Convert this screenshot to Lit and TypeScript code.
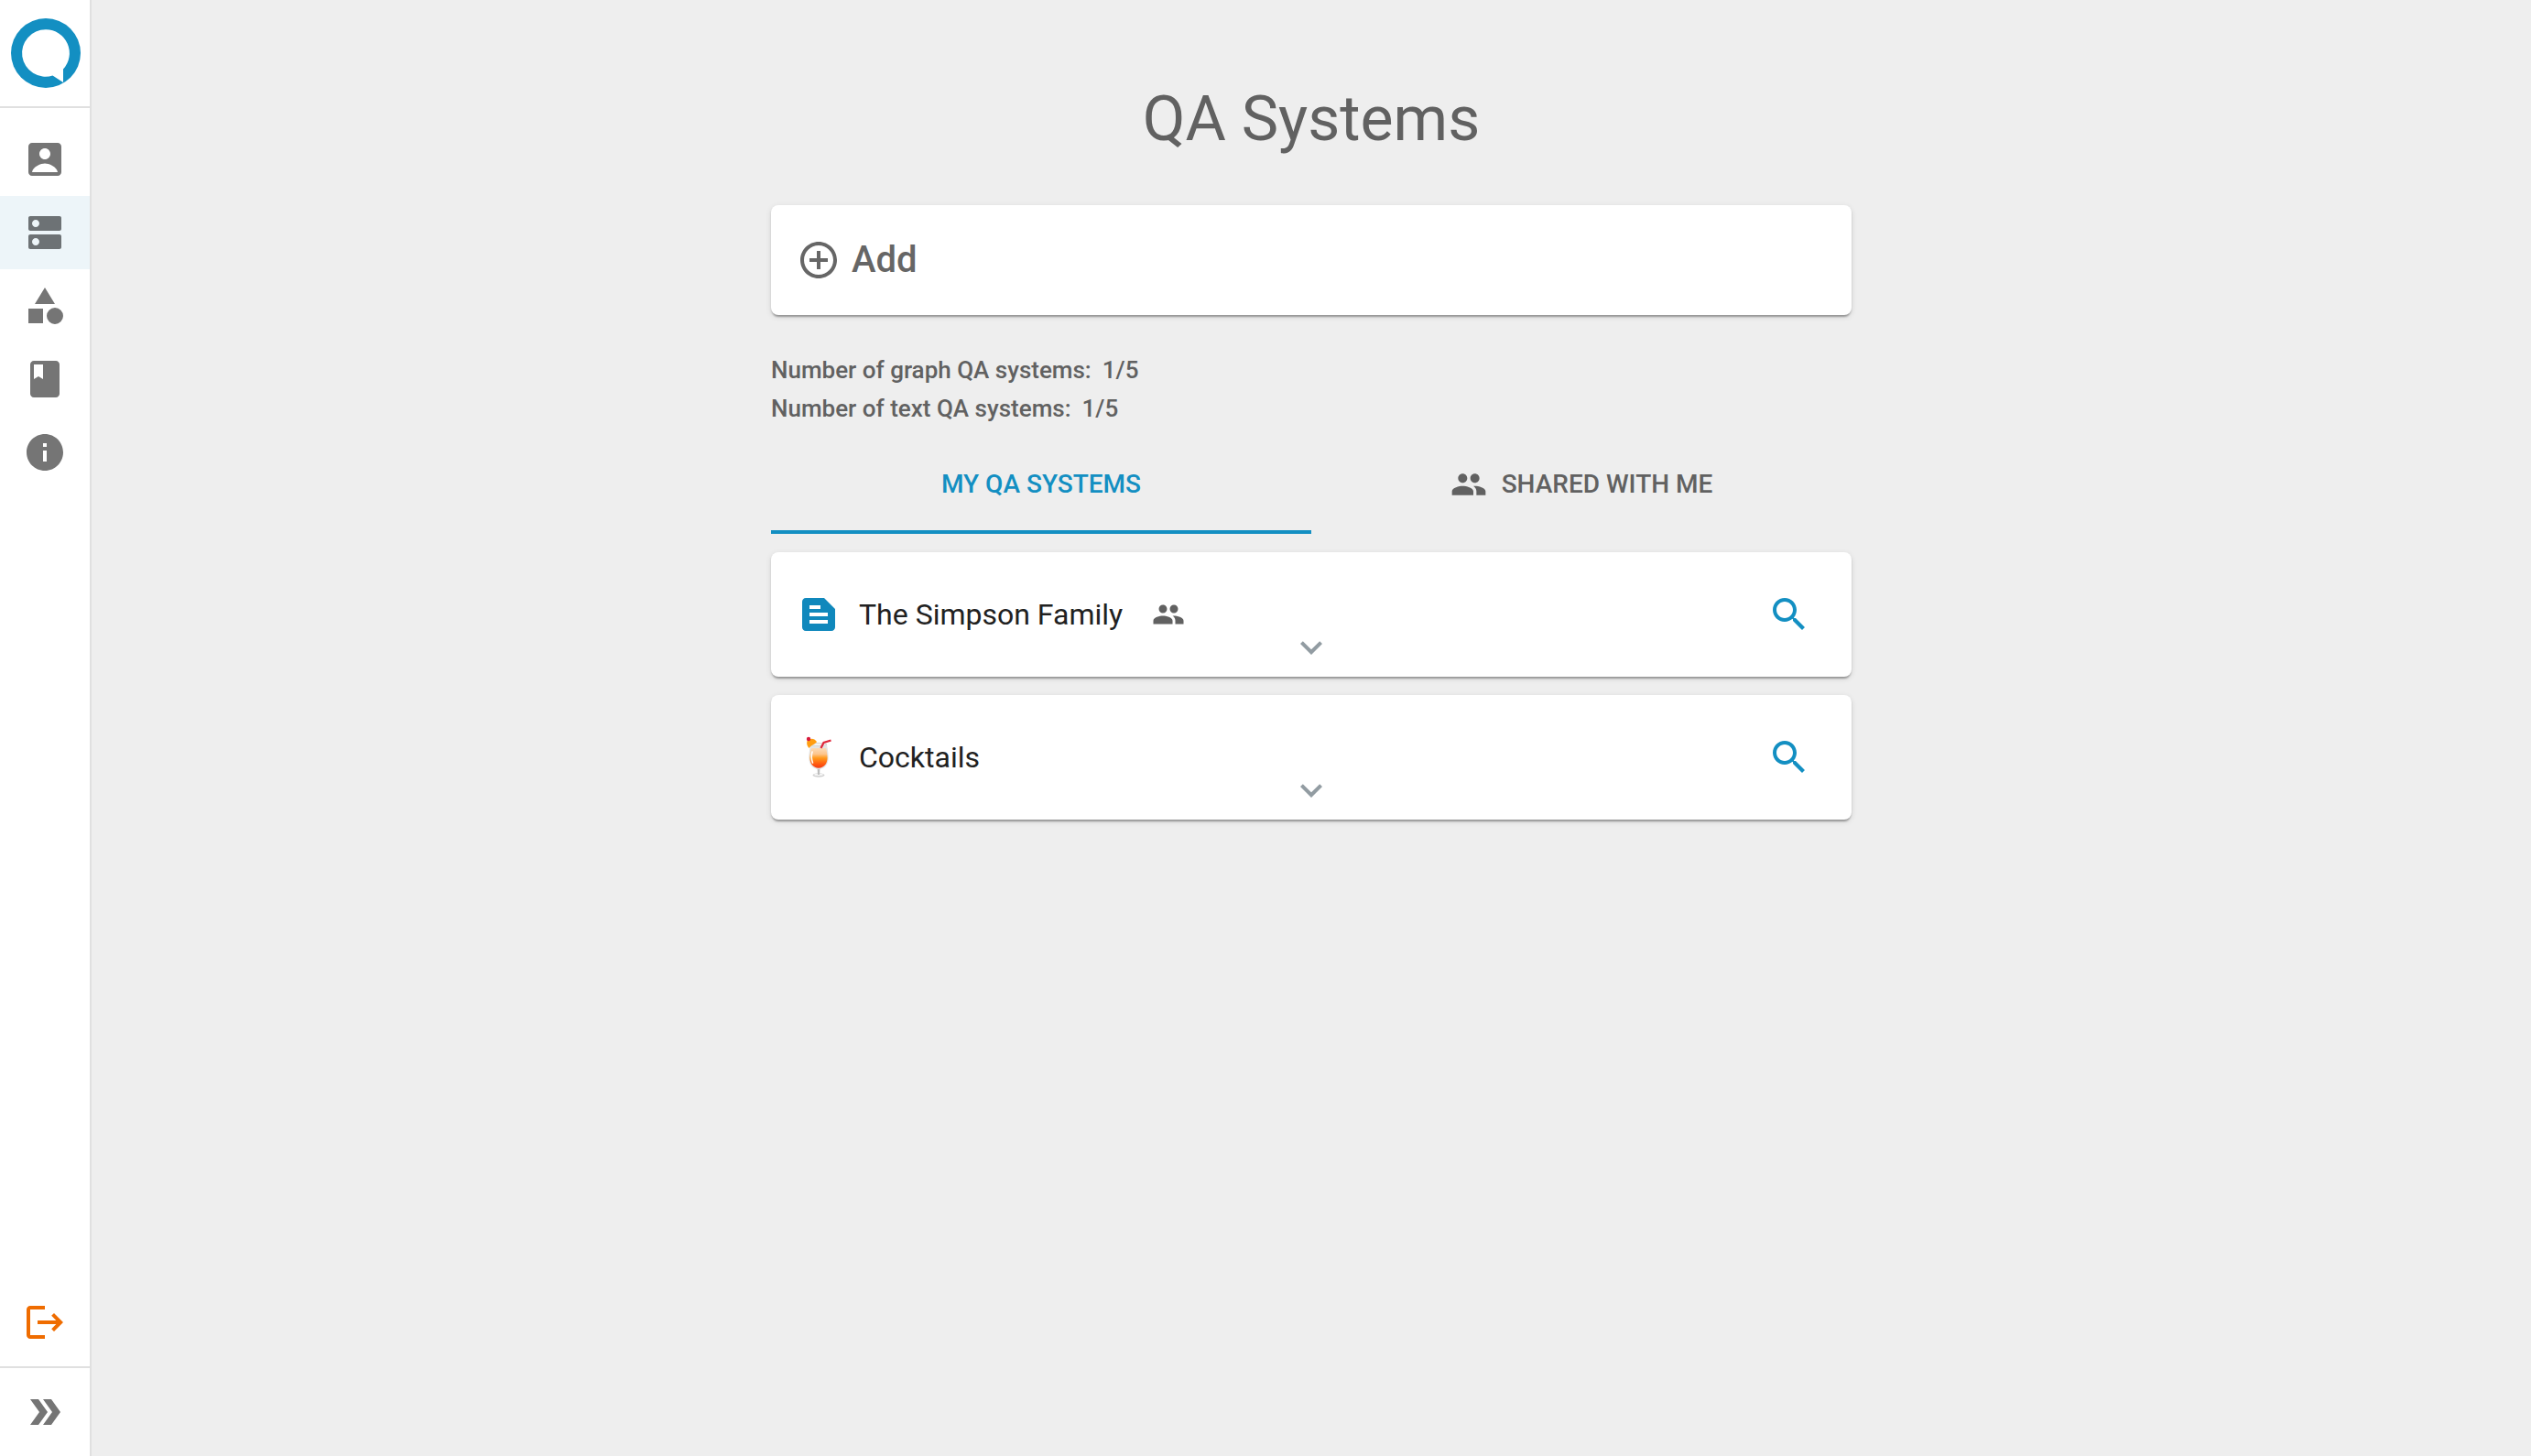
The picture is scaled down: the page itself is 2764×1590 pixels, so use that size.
import { LitElement, html, css, svg } from "lit";
import { customElement, state } from "lit/decorators.js";

const PEOPLE = "M16 11c1.66 0 2.99-1.34 2.99-3S17.66 5 16 5c-1.66 0-3 1.34-3 3s1.34 3 3 3zm-8 0c1.66 0 2.99-1.34 2.99-3S9.66 5 8 5C6.34 5 5 6.34 5 8s1.34 3 3 3zm0 2c-2.33 0-7 1.17-7 3.5V19h14v-2.500c0-2.330-4.670-3.500-7-3.500zm8 0c-.29 0-.62.02-.97.05 1.160.84 1.970 1.970 1.970 3.450V19h6v-2.500c0-2.330-4.670-3.500-7-3.500z";
const SEARCH = "M15.5 14h-.79l-.28-.27C15.41 12.59 16 11.11 16 9.500 16 5.910 13.090 3 9.500 3S3 5.910 3 9.500 5.910 16 9.500 16c1.610 0 3.090-.59 4.230-1.570l.27.28v.79l5 4.990L20.490 19l-4.990-5zm-6 0C7.010 14 5 11.990 5 9.500S7.010 5 9.500 5 14 7.010 14 9.500 11.990 14 9.500 14z";
const ARTICLE = "M15 3H5c-1.100 0-1.990.9-1.990 2L3 19c0 1.100.89 2 1.990 2H19c1.100 0 2-.9 2-2V9l-6-6zM7 7h6v2H7V7zm10 10H7v-2h10v2zm0-4H7v-2h10v2z";
const EXPAND = "M16.590 8.590 12 13.170 7.410 8.590 6 10l6 6 6-6z";
const ADD = "M13 7h-2v4H7v2h4v4h2v-4h4v-2h-4V7zm-1-5C6.490 2 2 6.490 2 12s4.490 10 10 10 10-4.490 10-10S17.510 2 12 2zm0 18c-4.410 0-8-3.590-8-8s3.590-8 8-8 8 3.590 8 8-3.590 8-8 8z";
const LOGOUT = "M4 5h8V3H4c-1.100 0-2 .9-2 2v14c0 1.100.9 2 2 2h8v-2H4V5zM22 12l-5-5-1.410 1.410L18.170 11H8v2h10.170l-2.580 2.580L17 17z";
const DOUBLE_ARROW = "M15.5 5H11l5 7-5 7h4.500l5-7zM8.500 5H4l5 7-5 7h4.500l5-7z";

const NAV = [
  { label: "Account", path: "M3 5v14c0 1.100.89 2 2 2h14c1.100 0 2-.9 2-2V5c0-1.100-.9-2-2-2H5c-1.110 0-2 .9-2 2zm12 4c0 1.660-1.340 3-3 3s-3-1.340-3-3 1.340-3 3-3 3 1.340 3 3zm-10 10c.4-3.200 5-4.800 7-4.800s6.600 1.600 7 4.800z" },
  { label: "Systems", path: "M20 13H4c-.55 0-1 .45-1 1v6c0 .55.45 1 1 1h16c.55 0 1-.45 1-1v-6c0-.55-.45-1-1-1zM7 19c-1.100 0-2-.9-2-2s.9-2 2-2 2 .9 2 2-.9 2-2 2zM20 3H4c-.55 0-1 .45-1 1v6c0 .55.45 1 1 1h16c.55 0 1-.45 1-1V4c0-.55-.45-1-1-1zM7 9c-1.100 0-2-.9-2-2s.9-2 2-2 2 .9 2 2-.9 2-2 2z" },
  { label: "Categories", path: "M12 2l-5.500 9h11zM17.500 13a4.500 4.500 0 1 0 0 9 4.500 4.500 0 1 0 0-9zM3 13.500h8v8H3z" },
  { label: "Documentation", path: "M18 2H6c-1.100 0-2 .9-2 2v16c0 1.100.9 2 2 2h12c1.100 0 2-.9 2-2V4c0-1.100-.9-2-2-2zM6 4h5v8l-2.500-1.500L6 12V4z" },
  { label: "Information", path: "M12 2C6.480 2 2 6.480 2 12s4.480 10 10 10 10-4.480 10-10S17.520 2 12 2zm1 15h-2v-6h2v6zm0-8h-2V7h2v2z" },
];

const QUOTAS = [
  { kind: "graph", used: 1, limit: 5 },
  { kind: "text", used: 1, limit: 5 },
];

const SYSTEMS = [
  { name: "The Simpson Family", icon: "article", shared: true },
  { name: "Cocktails", icon: "cocktail", shared: false },
];

const icon = (path: string, cls = "") => html`
  <svg class="icon ${cls}" viewBox="0 0 24 24" aria-hidden="true">${svg`<path d=${path}></path>`}</svg>
`;

const cocktail = html`
  <svg class="icon" viewBox="0 0 48 48" aria-hidden="true">
    <defs>
      <linearGradient id="drink" x1="0" y1="0" x2="0" y2="1">
        <stop offset="0" stop-color="#fbdcb8"></stop>
        <stop offset=".3" stop-color="#fdc58c"></stop>
        <stop offset=".5" stop-color="#ff9a1c"></stop>
        <stop offset=".8" stop-color="#ff5a10"></stop>
        <stop offset="1" stop-color="#f23a12"></stop>
      </linearGradient>
    </defs>
    <ellipse cx="24" cy="43.500" rx="6.500" ry="2.200" fill="#cfcfcf"></ellipse>
    <ellipse cx="24" cy="43" rx="5" ry="1.200" fill="#f4f4f4"></ellipse>
    <path d="M22.500 35h3l-.5 8h-2z" fill="#bdbdbd"></path>
    <path d="M15 9.500c-.4 4-1.700 9-1.700 15 0 7.500 4.200 12.500 10.700 12.500s10.700-5 10.700-12.500c0-6-1.300-11-1.700-15z" fill="#e4e4e4"></path>
    <path d="M15.800 14c-.5 3-1.400 6.500-1.400 10.500 0 6.500 4 11.200 9.600 11.200s9.600-4.700 9.600-11.200c0-4-.9-7.500-1.400-10.500z" fill="url(#drink)"></path>
    <ellipse cx="24" cy="10" rx="9" ry="1.600" fill="#f3f3f3" stroke="#cfcfcf" stroke-width=".8"></ellipse>
    <path d="M26.500 14l3-6 8-2.500" fill="none" stroke="#e0263a" stroke-width="2.200"></path>
    <path d="M11.500 6c3-3.500 8-3 10.500 1-1 2.500-5.500 3-8.500 7-2-2-3-5-2-8z" fill="#ff9e12"></path>
    <circle cx="13" cy="4" r="2.200" fill="#d81b3c"></circle>
    <path d="M17 18c-1.200 4-1 8 .5 12" fill="none" stroke="#fff" stroke-width="1.600" stroke-linecap="round"></path>
  </svg>
`;

@customElement("app-sidebar")
class AppSidebar extends LitElement {
  static styles = css`
    :host {
      display: flex;
      flex-direction: column;
      box-sizing: border-box;
      width: 100px;
      background: #fff;
      border-right: 2px solid #e0e0e0;
    }
    .brand {
      display: flex;
      padding: 20px 10px 20px 12px;
      border-bottom: 2px solid #e0e0e0;
    }
    .logo { width: 76px; height: 76px; display: block; }
    .nav { flex: 1; padding: 16px 0; }
    .item {
      display: flex;
      align-items: center;
      justify-content: center;
      width: 100%;
      height: 80px;
      padding: 0;
      border: 0;
      background: none;
      color: #757575;
      cursor: pointer;
    }
    .item.active { background: #edf5f9; color: #6d7275; }
    .item.logout { color: #ef6c00; margin-bottom: 8px; }
    .item.expand { height: 96px; border-top: 2px solid #e0e0e0; box-sizing: content-box; }
    .icon { width: 48px; height: 48px; fill: currentColor; }
  `;

  render() {
    return html`
      <a class="brand" href="#" aria-label="Home">
        <svg class="logo" viewBox="0 0 76 76" aria-hidden="true">
          <circle cx="38" cy="38" r="38" fill="#138fc2"></circle>
          <path d="M38 12.300a25.700 25.700 0 1 0 7.500 50.200L57 70V55.500A25.700 25.700 0 0 0 38 12.300z" fill="#fff"></path>
        </svg>
      </a>
      <nav class="nav">
        ${NAV.map((n, i) => html`
          <a class="item ${i === 1 ? "active" : ""}" href="#" aria-label=${n.label}>${icon(n.path)}</a>
        `)}
      </nav>
      <button class="item logout" aria-label="Log out">${icon(LOGOUT)}</button>
      <button class="item expand" aria-label="Expand menu">${icon(DOUBLE_ARROW)}</button>
    `;
  }
}

@customElement("system-card")
class SystemCard extends LitElement {
  static properties = { system: { attribute: false } };
  declare system: (typeof SYSTEMS)[number];

  static styles = css`
    :host {
      display: grid;
      grid-template-columns: 1fr auto 1fr;
      height: 136px;
      box-sizing: border-box;
      padding: 0 28px;
      border-radius: 8px;
      background: #fff;
      box-shadow: 0 4px 2px -2px rgba(0, 0, 0, 0.2), 0 2px 2px rgba(0, 0, 0, 0.14), 0 2px 6px rgba(0, 0, 0, 0.12);
    }
    .title { display: flex; align-items: center; }
    .name { margin: 0 32px 0 20px; font-size: 32px; line-height: 48px; font-weight: 400; color: #212121; }
    .icon { width: 48px; height: 48px; fill: currentColor; display: block; flex: none; }
    .article { color: #1088bc; }
    .people { width: 36px; height: 36px; color: #616161; }
    button { display: block; padding: 0; border: 0; background: none; cursor: pointer; }
    .expand { align-self: end; margin-bottom: 8px; color: #929ca2; }
    .search { justify-self: end; align-self: center; padding: 16px; color: #138fc2; }
  `;

  render() {
    const s = this.system;
    return html`
      <div class="title">
        ${s.icon === "article" ? icon(ARTICLE, "article") : cocktail}
        <h2 class="name">${s.name}</h2>
        ${s.shared ? icon(PEOPLE, "people") : ""}
      </div>
      <button class="expand" aria-label="Show details">${icon(EXPAND)}</button>
      <button class="search" aria-label="Search">${icon(SEARCH)}</button>
    `;
  }
}

@customElement("app-root")
class AppRoot extends LitElement {
  @state() private tab = 0;

  static styles = css`
    :host {
      display: flex;
      min-height: 100vh;
      background: #eee;
      color: #616161;
      font-family: Roboto, "Liberation Sans", sans-serif;
    }
    .main { flex: 1; display: flex; justify-content: center; padding: 90px 24px 48px; }
    .content { flex: 1; max-width: 1180px; }
    .heading { margin: 0 0 54px; text-align: center; font-size: 68px; line-height: 80px; font-weight: 400; }
    .add {
      display: flex;
      align-items: center;
      gap: 12px;
      width: 100%;
      height: 120px;
      padding: 0 28px;
      border: 0;
      border-radius: 8px;
      background: #fff;
      box-shadow: 0 4px 2px -2px rgba(0, 0, 0, 0.2), 0 2px 2px rgba(0, 0, 0, 0.14), 0 2px 6px rgba(0, 0, 0, 0.12);
      color: #666;
      font: 500 40px/48px Roboto, "Liberation Sans", sans-serif;
      cursor: pointer;
    }
    .icon { width: 48px; height: 48px; fill: currentColor; }
    .quotas { margin: 39px 0 0; padding: 0; list-style: none; font-size: 26px; line-height: 42px; font-weight: 500; }
    .quota { display: flex; gap: 12px; }
    .tabs { display: flex; margin: 12px 0 20px; }
    .tab {
      flex: 1;
      display: flex;
      align-items: center;
      justify-content: center;
      gap: 16px;
      height: 104px;
      padding: 0;
      border: 0;
      border-bottom: 4px solid transparent;
      background: none;
      color: inherit;
      font: 500 28px/48px Roboto, "Liberation Sans", sans-serif;
      text-transform: uppercase;
      cursor: pointer;
    }
    .tab.active { color: #138fc2; border-bottom-color: #138fc2; }
    .people { width: 40px; height: 40px; }
    .list { display: grid; gap: 20px; }
  `;

  render() {
    return html`
      <app-sidebar></app-sidebar>
      <main class="main">
        <div class="content">
          <h1 class="heading">QA Systems</h1>
          <button class="add">${icon(ADD)}<span>Add</span></button>
          <ul class="quotas">
            ${QUOTAS.map((q) => html`
              <li class="quota"><span>Number of ${q.kind} QA systems:</span><span>${q.used}/${q.limit}</span></li>
            `)}
          </ul>
          <div class="tabs" role="tablist">
            <button class="tab ${this.tab === 0 ? "active" : ""}" role="tab" aria-selected=${this.tab === 0} @click=${() => (this.tab = 0)}>
              My QA systems
            </button>
            <button class="tab ${this.tab === 1 ? "active" : ""}" role="tab" aria-selected=${this.tab === 1} @click=${() => (this.tab = 1)}>
              ${icon(PEOPLE, "people")}<span>Shared with me</span>
            </button>
          </div>
          <div class="list">
            ${SYSTEMS.map((s) => html`<system-card .system=${s}></system-card>`)}
          </div>
        </div>
      </main>
    `;
  }
}
